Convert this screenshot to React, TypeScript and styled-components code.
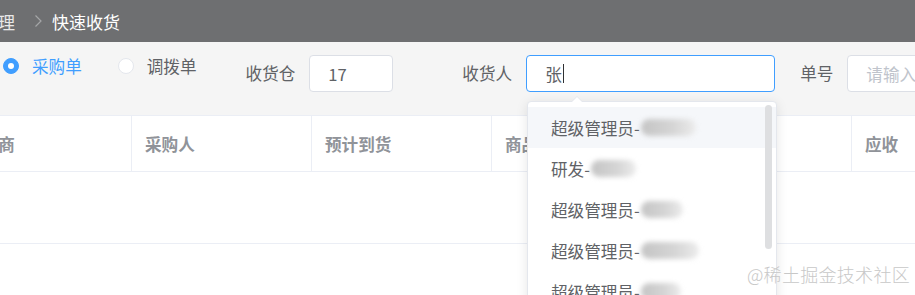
import styled, { createGlobalStyle } from 'styled-components'

const GlobalStyle = createGlobalStyle`
    html, body {
        margin: 0;
        padding: 0;
        background: #ffffff;
        overflow: hidden;
    }
    body {
        font-family: "Noto Sans CJK SC", "Noto Sans", sans-serif;
        width: 915px;
        height: 295px;
    }
`

const Page = styled('div')`
    position: relative;
    width: 915px;
    height: 295px;
    overflow: hidden;
`

const TopBar = styled('div')`
    height: 42px;
    background: #6e6f71;
    display: flex;
    align-items: center;
    font-size: 17px;
    color: #ffffff;
`

const Crumb = styled('span')<{ $muted?: boolean }>`
    color: ${p => (p.$muted ? '#e8e8e8' : '#ffffff')};
    margin-left: -2px;
`

const Separator = styled('svg')`
    width: 9px;
    height: 14px;
    margin: 0 11px 0 19px;
    flex-shrink: 0;
`

const FilterBar = styled('div')`
    height: 73px;
    background: #f5f5f5;
    display: flex;
    align-items: flex-start;
    padding: 13px 0 0 3px;
    box-sizing: border-box;
    white-space: nowrap;
`

const RadioGroup = styled('div')`
    display: flex;
    align-items: center;
    height: 22px;
`

const Radio = styled('label')<{ $gap?: number }>`
    display: flex;
    align-items: center;
    margin-left: ${p => p.$gap ?? 0}px;
`

const RadioDot = styled('span')<{ $checked?: boolean }>`
    width: 16px;
    height: 16px;
    border-radius: 50%;
    box-sizing: border-box;
    border: 1px solid ${p => (p.$checked ? '#409eff' : '#e4e7ed')};
    background: ${p => (p.$checked ? '#409eff' : '#ffffff')};
    display: flex;
    align-items: center;
    justify-content: center;

    &::after {
        content: '';
        width: 6px;
        height: 6px;
        border-radius: 50%;
        background: #ffffff;
        display: ${p => (p.$checked ? 'block' : 'none')};
    }
`

const RadioText = styled('span')<{ $checked?: boolean }>`
    margin-left: 13px;
    font-size: 16.6px;
    color: ${p => (p.$checked ? '#409eff' : '#606266')};
`

const Field = styled('div')<{ $gap: number }>`
    display: flex;
    align-items: center;
    margin-left: ${p => p.$gap}px;
`

const Label = styled('span')`
    font-size: 16.6px;
    color: #606266;
    margin-right: 14px;
    line-height: 37px;
`

const Input = styled('div')<{ $width: number; $focus?: boolean }>`
    width: ${p => p.$width}px;
    height: 37px;
    box-sizing: border-box;
    border: 1px solid ${p => (p.$focus ? '#409eff' : '#dcdfe6')};
    border-radius: 4px;
    background: #ffffff;
    display: flex;
    align-items: center;
    padding-left: 18px;
    font-size: 16.6px;
    color: #606266;
    flex-shrink: 0;
`

const Placeholder = styled('span')`
    color: #c0c4cc;
`

const Caret = styled('span')`
    display: inline-block;
    width: 1px;
    height: 19px;
    background: #303133;
    margin-left: 1px;
`

const Table = styled('div')`
    border-top: 1px solid #ebeef5;
    margin-left: -48px;
`

const HeaderRow = styled('div')`
    display: grid;
    grid-template-columns: repeat(6, 180px);
    height: 55px;
    border-bottom: 1px solid #ebeef5;
`

const HeaderCell = styled('div')<{ $last?: boolean }>`
    display: flex;
    align-items: center;
    padding-left: 13px;
    border-right: ${p => (p.$last ? 'none' : '1px solid #ebeef5')};
    font-size: 16.6px;
    font-weight: 700;
    color: #909399;
`

const BodyRow = styled('div')`
    height: 71px;
    border-bottom: 1px solid #ebeef5;
`

const Dropdown = styled('div')`
    position: absolute;
    left: 527px;
    top: 101px;
    width: 250px;
    height: 220px;
    background: #ffffff;
    border: 1px solid #e4e7ed;
    border-radius: 4px;
    box-shadow: 0 2px 12px rgba(0, 0, 0, 0.1);
    box-sizing: border-box;
    padding-top: 5px;

    &::before {
        content: '';
        position: absolute;
        left: 43px;
        top: -6px;
        border: 6px solid transparent;
        border-top: 0;
        border-bottom-color: #e4e7ed;
    }
    &::after {
        content: '';
        position: absolute;
        left: 44px;
        top: -5px;
        border: 5px solid transparent;
        border-top: 0;
        border-bottom-color: #ffffff;
    }
`

const Option = styled('div')<{ $hover?: boolean }>`
    height: 41px;
    display: flex;
    align-items: center;
    padding-left: 23px;
    font-size: 16.6px;
    color: #606266;
    background: ${p => (p.$hover ? '#f5f7fa' : 'transparent')};
    white-space: nowrap;
`

const Blurred = styled('span')<{ $width: number }>`
    display: inline-block;
    width: ${p => p.$width}px;
    height: 17px;
    margin-left: 1px;
    border-radius: 9px;
    background: linear-gradient(90deg, #c4c4c4, #d6d6d6 60%, #ececec);
    filter: blur(2.5px);
`

const ScrollThumb = styled('div')`
    position: absolute;
    right: 4px;
    top: 3px;
    width: 7px;
    height: 144px;
    border-radius: 4px;
    background: #dedfe1;
`

const Watermark = styled('div')`
    position: absolute;
    right: 5px;
    bottom: 8px;
    font-size: 18px;
    color: #c8c8c8;
    font-family: "Noto Sans CJK SC", sans-serif;
    font-weight: 300;
    letter-spacing: 0.3px;
`

const columns = ['供应商', '采购人', '预计到货', '商品', '', '应收']

const options = [
    { prefix: '超级管理员-', blur: 55, hover: true },
    { prefix: '研发-', blur: 45 },
    { prefix: '超级管理员-', blur: 42 },
    { prefix: '超级管理员-', blur: 58 },
    { prefix: '超级管理员-', blur: 40 },
]

export default function App() {
    return (
        <Page>
            <GlobalStyle />
            <TopBar>
                <Crumb $muted>理</Crumb>
                <Separator viewBox="0 0 9 14">
                    <path d="M1.5 1.5 L7 7 L1.5 12.5" fill="none" stroke="#a5a6a8" strokeWidth="1.2" />
                </Separator>
                <Crumb>快速收货</Crumb>
            </TopBar>

            <FilterBar>
                <RadioGroup>
                    <Radio>
                        <RadioDot $checked />
                        <RadioText $checked>采购单</RadioText>
                    </Radio>
                    <Radio $gap={36}>
                        <RadioDot />
                        <RadioText>调拨单</RadioText>
                    </Radio>
                </RadioGroup>
                <Field $gap={49}>
                    <Label>收货仓</Label>
                    <Input $width={84}>17</Input>
                </Field>
                <Field $gap={69}>
                    <Label>收货人</Label>
                    <Input $width={249} $focus>
                        张<Caret />
                    </Input>
                </Field>
                <Field $gap={25}>
                    <Label>单号</Label>
                    <Input $width={140}>
                        <Placeholder>请输入</Placeholder>
                    </Input>
                </Field>
            </FilterBar>

            <Table>
                <HeaderRow>
                    {columns.map((c, i) => (
                        <HeaderCell key={i} $last={i === columns.length - 1}>
                            {c}
                        </HeaderCell>
                    ))}
                </HeaderRow>
                <BodyRow />
            </Table>

            <Dropdown>
                {options.map((o, i) => (
                    <Option key={i} $hover={o.hover}>
                        {o.prefix}
                        <Blurred $width={o.blur} />
                    </Option>
                ))}
                <ScrollThumb />
            </Dropdown>

            <Watermark>@稀土掘金技术社区</Watermark>
        </Page>
    )
}
